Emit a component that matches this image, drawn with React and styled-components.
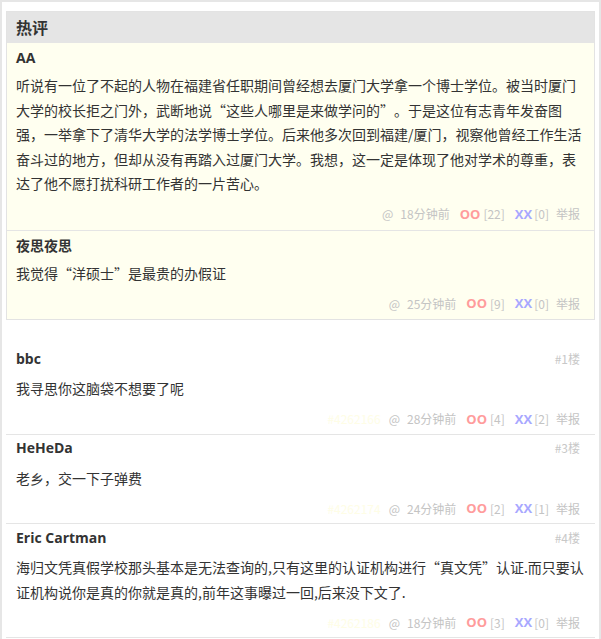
import React from 'react';
import styled, { createGlobalStyle } from 'styled-components';

const Global = createGlobalStyle`
  html, body { margin: 0; padding: 0; background: #fff; }
  body { font-family: "Noto Sans CJK SC", "Open Sans", sans-serif; color: #333; }
  * { box-sizing: border-box; }
`;

const Page = styled.div`
  width: 601px;
  border: 2px solid #e6e6e6;
  border-bottom: none;
  padding: 9px 4px 0 4px;
  min-height: 639px;
`;

const HotBox = styled.section`
  border: 1px solid #e3e3e3;
  background: #fffff0;
`;

const HotHeader = styled.h2`
  margin: 0;
  height: 31px;
  line-height: 31px;
  background: #e5e5e5;
  padding-left: 9px;
  font-size: 16px;
  font-weight: bold;
  color: #333;
  font-family: "Noto Sans CJK SC", sans-serif;
`;

const Item = styled.div`
  padding: ${p => (p.$hot ? '1px 8px 6px 9px' : '0 8px 5px 10px')};
  border-top: ${p => (p.$hot && !p.$first ? '1px solid #e5e5e5' : 'none')};
  border-bottom: ${p => (p.$hot ? 'none' : '1px solid #e5e5e5')};
`;

const NameRow = styled.div`
  display: flex;
  justify-content: space-between;
  align-items: center;
  height: 26px;
  padding-right: ${p => (p.$hot ? '6px' : '7px')};
`;

const Name = styled.span`
  font-family: "Open Sans", "Noto Sans CJK SC", sans-serif;
  font-weight: bold;
  font-size: 14px;
  color: #333;
`;

const Floor = styled.span`
  font-size: 12px;
  color: #c8c8c8;
`;

const Body = styled.p`
  margin: ${p => (p.$hot ? '3px' : '5px')} 0 0 0;
  font-size: 14px;
  line-height: 1.75;
  color: #333;
`;

const Quote = styled.span`
  display: inline-block;
  width: 1em;
  text-align: ${p => (p.$open ? 'right' : 'left')};
`;

const Footer = styled.div`
  display: flex;
  justify-content: flex-end;
  align-items: center;
  height: 20px;
  margin-top: 8px;
  padding-right: ${p => (p.$hot ? '6px' : '7px')};
  font-size: 12px;
  color: #c4c4c4;
  white-space: nowrap;
`;

const Pid = styled.span`
  color: #fefde6;
  margin-right: 8px;
`;

const At = styled.span`
  margin-right: 7px;
`;

const Time = styled.span`
  margin-right: 10px;
`;

const Vote = styled.span`
  font-family: "Open Sans", sans-serif;
  font-weight: bold;
  font-size: 13px;
  color: ${p => p.$color};
  margin-right: ${p => p.$gap}px;
`;

const Count = styled.span`
  margin-right: ${p => p.$gap}px;
`;

const List = styled.div`
  margin-top: 25px;
`;

const hot = [
  {
    name: 'AA',
    text: '听说有一位了不起的人物在福建省任职期间曾经想去厦门大学拿一个博士学位。被当时厦门大学的校长拒之门外，武断地说“这些人哪里是来做学问的”。于是这位有志青年发奋图强，一举拿下了清华大学的法学博士学位。后来他多次回到福建/厦门，视察他曾经工作生活奋斗过的地方，但却从没有再踏入过厦门大学。我想，这一定是体现了他对学术的尊重，表达了他不愿打扰科研工作者的一片苦心。',
    time: '18分钟前', oo: 22, xx: 0,
  },
  {
    name: '夜思夜思',
    text: '我觉得“洋硕士”是最贵的办假证',
    time: '25分钟前', oo: 9, xx: 0,
  },
];

const comments = [
  { name: 'bbc', floor: '#1楼', text: '我寻思你这脑袋不想要了呢', id: '#4262166', time: '28分钟前', oo: 4, xx: 2 },
  { name: 'HeHeDa', floor: '#3楼', text: '老乡，交一下子弹费', id: '#4262174', time: '24分钟前', oo: 2, xx: 1 },
  {
    name: 'Eric Cartman', floor: '#4楼',
    text: '海归文凭真假学校那头基本是无法查询的,只有这里的认证机构进行“真文凭”认证.而只要认证机构说你是真的你就是真的,前年这事曝过一回,后来没下文了.',
    id: '#4262186', time: '18分钟前', oo: 3, xx: 0,
  },
];

function Text({ children }) {
  return children.split(/([“”])/).map((part, i) =>
    part === '“' || part === '”'
      ? <Quote key={i} $open={part === '“'}>{part}</Quote>
      : part
  );
}

function Meta({ c, hot }) {
  return (
    <Footer $hot={hot}>
      {c.id && <Pid>{c.id}</Pid>}
      <At>@</At>
      <Time>{c.time}</Time>
      <Vote $color="#ff9c9c" $gap={3}>OO</Vote>
      <Count $gap={10}>[{c.oo}]</Count>
      <Vote $color="#a8a8ff" $gap={2}>XX</Vote>
      <Count $gap={7}>[{c.xx}]</Count>
      <span>举报</span>
    </Footer>
  );
}

export default function App() {
  return (
    <>
      <Global />
      <Page>
        <HotBox>
          <HotHeader>热评</HotHeader>
          {hot.map((c, i) => (
            <Item key={i} $hot $first={i === 0}>
              <NameRow $hot><Name>{c.name}</Name></NameRow>
              <Body $hot><Text>{c.text}</Text></Body>
              <Meta c={c} hot />
            </Item>
          ))}
        </HotBox>
        <List>
          {comments.map((c, i) => (
            <Item key={i}>
              <NameRow>
                <Name>{c.name}</Name>
                <Floor>{c.floor}</Floor>
              </NameRow>
              <Body><Text>{c.text}</Text></Body>
              <Meta c={c} />
            </Item>
          ))}
        </List>
      </Page>
    </>
  );
}
